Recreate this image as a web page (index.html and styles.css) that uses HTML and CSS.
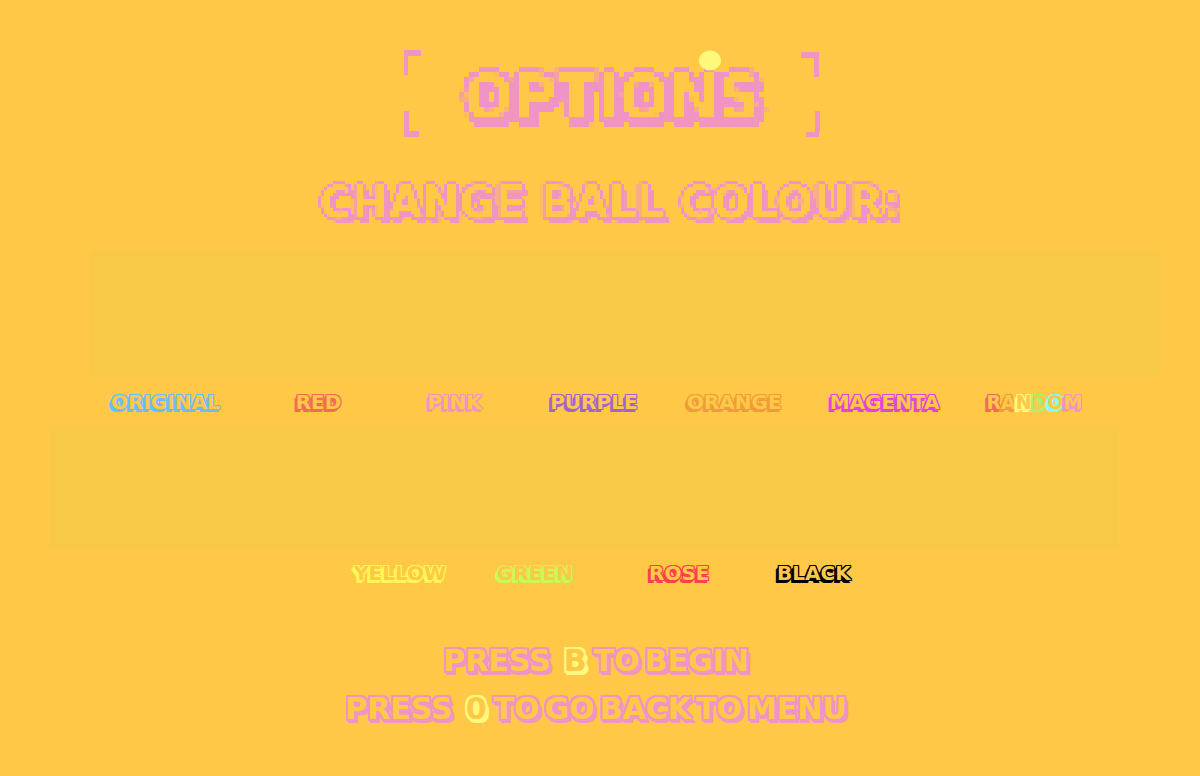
FILE: index.html
```html
<!DOCTYPE html>
<html lang="en">
<head>
<meta charset="utf-8">
<meta name="viewport" content="width=device-width, initial-scale=1">
<title>Options</title>
<link rel="stylesheet" href="styles.css">
</head>
<body>
<svg class="filters" aria-hidden="true">
  <filter id="pixel-large" x="0" y="0" width="100%" height="100%" color-interpolation-filters="sRGB">
    <feFlood x="2" y="2" width="1" height="1" flood-color="#000"/>
    <feComposite width="5" height="5"/>
    <feTile result="grid"/>
    <feComposite in="SourceGraphic" in2="grid" operator="in"/>
    <feMorphology operator="dilate" radius="2"/>
  </filter>
  <filter id="pixel-small" x="0" y="0" width="100%" height="100%" color-interpolation-filters="sRGB">
    <feFlood x="1" y="1" width="1" height="1" flood-color="#000"/>
    <feComposite width="3" height="3"/>
    <feTile result="grid"/>
    <feComposite in="SourceGraphic" in2="grid" operator="in"/>
    <feMorphology operator="dilate" radius="1"/>
  </filter>
</svg>
<main class="screen">
  <header class="frame">
    <svg class="frame-art" viewBox="0 0 416 87" aria-hidden="true">
      <g fill="#f094c4">
        <path d="M0 0h17v6H4v19H0z"/>
        <path d="M397 2h18v25h-5V8h-13z"/>
        <path d="M0 61h5v20h10v6H0z"/>
        <path d="M411 61h5v21h-1v5h-13v-5h9z"/>
      </g>
    </svg>
    <h1 class="title">OPTIONS</h1>
    <svg class="frame-art" viewBox="0 0 416 87" aria-hidden="true">
      <ellipse cx="306" cy="10.500" rx="11" ry="10" fill="#fff87c"/>
    </svg>
  </header>

  <h2 class="subtitle">CHANGE BALL COLOUR:</h2>

  <div class="strip strip-first"></div>
  <ul class="labels labels-first">
    <li class="label blue">ORIGINAL</li>
    <li class="label red">RED</li>
    <li class="label pink">PINK</li>
    <li class="label purple">PURPLE</li>
    <li class="label orange">ORANGE</li>
    <li class="label magenta">MAGENTA</li>
    <li class="label random"><span class="red">R</span><span class="orange">A</span><span class="lemon">N</span><span class="mint">D</span><span class="aqua">O</span><span class="pink">M</span></li>
  </ul>

  <div class="strip strip-second"></div>
  <ul class="labels labels-second">
    <li class="label yellow">YELLOW</li>
    <li class="label green">GREEN</li>
    <li class="label rose">ROSE</li>
    <li class="label black">BLACK</li>
  </ul>

  <footer class="hints">
    <p class="hint"><span>PRESS</span> <kbd class="key">B</kbd> <span>TO</span> <span>BEGIN</span></p>
    <p class="hint"><span>PRESS</span> <kbd class="key">0</kbd> <span>TO</span> <span>GO</span> <span>BACK</span> <span>TO</span> <span>MENU</span></p>
  </footer>
</main>
</body>
</html>
```

FILE: styles.css
```css
:root {
  --bg: #ffc847;
  --ink: #f094c4;
}

* {
  box-sizing: border-box;
}

body {
  margin: 0;
  min-height: 100vh;
  background: var(--bg);
  color: var(--bg);
  font-family: "DejaVu Sans", Verdana, sans-serif;
  font-weight: 700;
}

h1, h2, p, ul {
  margin: 0;
  padding: 0;
  font-weight: 700;
}

.filters {
  position: absolute;
  width: 0;
  height: 0;
}

.screen {
  display: flex;
  flex-direction: column;
  padding: 50px 0 48px;
}

.frame {
  position: relative;
  align-self: center;
  width: 416px;
  margin-left: 24px;
  padding: 7px 0 0;
  text-align: center;
}

.frame-art {
  position: absolute;
  inset: 0;
  width: 100%;
  height: 100%;
}

.title {
  font-size: 59px;
  line-height: 80px;
  filter: url(#pixel-large);
  text-shadow:
    -5px 0 var(--ink), 5px 0 var(--ink), 0 -5px var(--ink), 0 5px var(--ink),
    -4px -4px var(--ink), 4px -4px var(--ink), -4px 4px var(--ink), 5px 5px var(--ink),
    0 10px var(--ink), 5px 10px var(--ink), 10px 5px var(--ink), 9px 9px var(--ink);
}

.subtitle {
  margin: 44px 0 26px;
  padding-left: 20px;
  font-size: 44px;
  line-height: 44px;
  text-align: center;
  filter: url(#pixel-small);
  text-shadow:
    -3px 0 var(--ink), 3px 0 var(--ink), 0 -3px var(--ink), 0 3px var(--ink),
    -2px -2px var(--ink), 2px -2px var(--ink), -2px 2px var(--ink), 2px 2px var(--ink),
    3px 3px var(--ink), 4px 4px var(--ink), 5px 5px var(--ink);
}

.strip {
  height: 124px;
  background: #f7c946;
}

.strip-first {
  margin: 0 40px 0 90px;
}

.strip-second {
  margin: 0 81px 0 49px;
}

.labels {
  display: grid;
  list-style: none;
  font-size: 20px;
  line-height: 24px;
}

.labels-first {
  grid-template-columns: 185fr 132fr 123fr 137fr 143fr 157fr 214fr;
  padding: 15px 0 11px 9.250%;
}

.labels-second {
  grid-template-columns: 143fr 152fr 128fr 423fr;
  padding: 12px 0 0 29.500%;
}

.label {
  min-width: 0;
  white-space: nowrap;
}

.random {
  font-size: 19px;
}

.label,
.label span {
  text-shadow:
    -1px 0 var(--ink), 1px 0 var(--ink), 0 -1px var(--ink), 0 1px var(--ink),
    -1px -1px var(--ink), 1px -1px var(--ink), -1px 1px var(--ink), 1px 1px var(--ink),
    -2px 2px var(--ink), -3px 3px var(--ink), -2px 3px var(--ink), -1px 3px var(--ink);
}

.blue { --ink: #6cbcff; }
.red { --ink: #f06c58; }
.pink { --ink: #f094c4; }
.purple { --ink: #a464d0; }
.orange { --ink: #f09c3c; }
.magenta { --ink: #e444dc; }
.lemon { --ink: #fff87c; }
.mint { --ink: #a4f470; }
.aqua { --ink: #90f8f0; }
.yellow { --ink: #fff854; }
.green { --ink: #ccf854; }
.rose { --ink: #ff4050; }
.black { --ink: #000; }

.hints {
  display: flex;
  flex-direction: column;
  gap: 16px;
  padding: 60px 8px 0 0;
}

.hint {
  display: flex;
  flex-wrap: wrap;
  justify-content: center;
  gap: 5px;
  font-size: 30px;
  line-height: 32px;
}

.hint span,
.key {
  text-shadow:
    -2px 0 var(--ink), 2px 0 var(--ink), 0 -2px var(--ink), 0 2px var(--ink),
    -2px -2px var(--ink), 2px -2px var(--ink), -2px 2px var(--ink), 2px 2px var(--ink),
    3px 3px var(--ink), 4px 4px var(--ink), 2px 4px var(--ink), 0 4px var(--ink);
}

.key {
  --ink: #fff87c;
  margin: 0 2px 0 8px;
  font: inherit;
}
```
